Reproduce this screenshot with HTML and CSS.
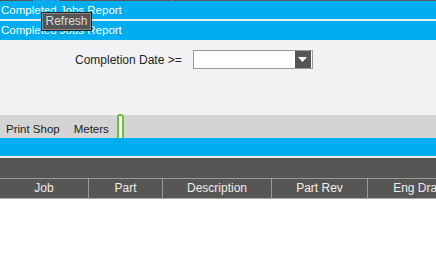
FILE: index.html
```html
<!DOCTYPE html>
<html lang="en">
<head>
  <meta charset="UTF-8">
  <title>Completed Jobs Report</title>
  <link rel="stylesheet" href="styles.css">
</head>
<body>
  <div class="topline">
    <span class="seg dark" style="width: 33px"></span>
    <span class="seg blue" style="width: 27px"></span>
    <span class="seg dark" style="width: 112px"></span>
    <span class="seg tick"></span>
    <span class="seg dark rest"></span>
  </div>

  <div class="titlebar">Completed Jobs Report</div>
  <div class="sep"></div>
  <div class="titlebar second">Completed Jobs Report</div>

  <div class="tooltip">Refresh</div>

  <div class="filters">
    <label class="field">
      <span>Completion Date &gt;=</span>
      <span class="combo">
        <span class="combo-input"></span>
        <span class="combo-btn">
          <svg width="9" height="5" viewBox="0 0 9 5"><path d="M0 0h9L4.5 5z" fill="#fff"/></svg>
        </span>
      </span>
    </label>
  </div>

  <div class="tabs">
    <span class="tab">Print Shop</span>
    <span class="tab">Meters</span>
    <span class="tab-marker"></span>
  </div>

  <div class="bluebar"></div>
  <div class="sep"></div>
  <div class="groupbar"></div>

  <div class="grid-head">
    <div class="col" style="width: 89px">Job</div>
    <div class="col" style="width: 74px">Part</div>
    <div class="col" style="width: 109px">Description</div>
    <div class="col" style="width: 96px">Part Rev</div>
    <div class="col" style="width: 120px">Eng Drawing</div>
  </div>
</body>
</html>
```

FILE: styles.css
```css
body {
  font-family: "Liberation Sans", Arial, sans-serif;
  font-size: 12px;
  color: #222;
  background: #fff;
  margin: 0;
  position: relative;
  overflow: hidden;
}
.topline {
  display: flex;
  height: 1px;
}
.seg {
  height: 1px;
}
.seg.dark {
  background: #555;
}
.seg.blue {
  background: #1a9be0;
}
.seg.tick {
  width: 1px;
  background: #999;
}
.seg.rest {
  flex: 1;
}
.titlebar {
  height: 18px;
  line-height: 18px;
  background: #00adef;
  color: #fff;
  font-size: 11.5px;
  padding-left: 1px;
  white-space: nowrap;
}
.titlebar.second {
  height: 19px;
}
.sep {
  height: 2px;
  background: #ececec;
}
.tooltip {
  position: absolute;
  left: 41px;
  top: 12px;
  width: 49px;
  height: 17px;
  line-height: 17px;
  background: #555;
  color: #ddd;
  border: 1px solid #222;
  box-shadow: inset 0 0 0 1px #888;
  text-align: center;
}
.filters {
  height: 75px;
  background: #f2f2f4;
  padding-top: 10px;
  box-sizing: border-box;
}
.field {
  display: flex;
  align-items: center;
  gap: 11px;
  padding-left: 75px;
}
.combo {
  display: flex;
  width: 120px;
  height: 19px;
  box-sizing: border-box;
  border: 1px solid #999;
  background: #fff;
}
.combo-input {
  flex: 1;
}
.combo-btn {
  width: 16px;
  margin-right: 1px;
  background: #555;
  display: flex;
  align-items: center;
  justify-content: center;
}
.tabs {
  display: flex;
  height: 23px;
  background: #d4d4d4;
  padding-left: 6px;
  font-size: 11.5px;
}
.tab {
  line-height: 20px;
  padding-top: 4px;
  margin-right: 14px;
  color: #222;
}
.tab-marker {
  width: 3px;
  height: 22px;
  margin-left: -6px;
  border: 2px solid #6dbf3c;
  border-bottom: none;
  border-radius: 3px 3px 0 0;
  background: #fff;
  align-self: flex-end;
}
.bluebar {
  height: 18px;
  background: #00adef;
}
.groupbar {
  height: 20px;
  background: #585654;
  border-bottom: 1px solid #999;
}
.grid-head {
  display: flex;
  height: 19px;
  background: #585654;
  border-bottom: 1px solid #aaa;
  white-space: nowrap;
  overflow: hidden;
}
.col {
  flex: none;
  box-sizing: border-box;
  line-height: 19px;
  text-align: center;
  color: #eee;
  border-right: 1px solid #999;
  overflow: hidden;
}
```
